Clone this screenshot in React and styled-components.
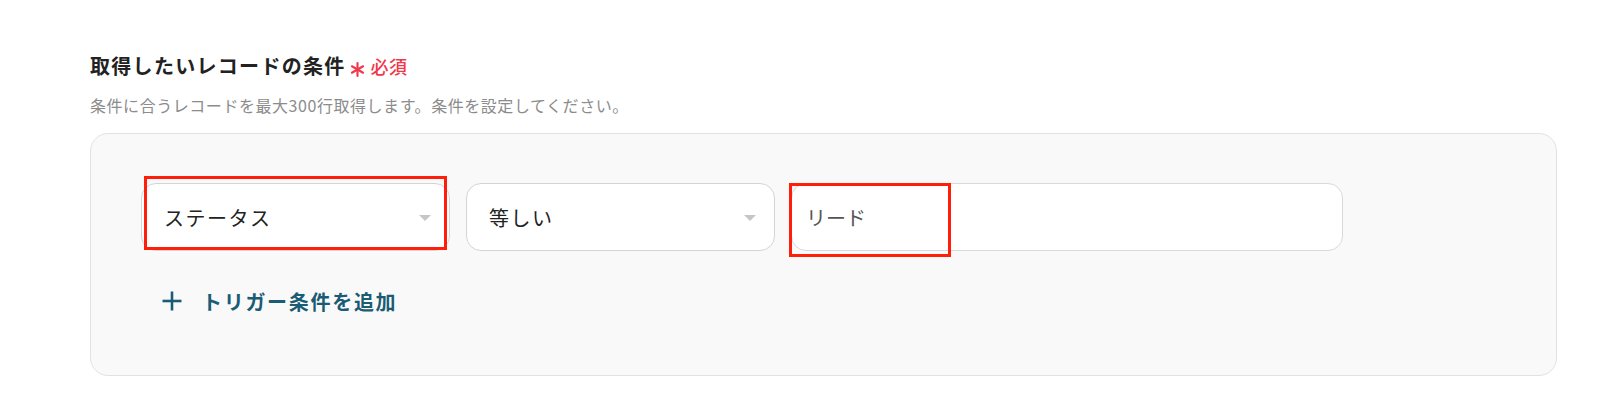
import React from "react";
import styled, { createGlobalStyle } from "styled-components";

const GlobalStyle = createGlobalStyle`
  html, body {
    margin: 0;
    padding: 0;
    background: #ffffff;
  }
  body {
    font-family: "Noto Sans CJK JP", "Noto Sans", sans-serif;
    color: #222;
  }
  * { box-sizing: border-box; }
`;

const Page = styled.div`
  width: 1600px;
  height: 412px;
  padding: 50px 0 0 90px;
`;

const TitleRow = styled.div`
  display: flex;
  align-items: baseline;
  gap: 4px;
  height: 32px;
`;

const Title = styled.h2`
  margin: 0;
  font-size: 20px;
  line-height: 32px;
  font-weight: 700;
  letter-spacing: 1.3px;
  color: #222;
`;

const Required = styled.span`
  display: inline-flex;
  align-items: baseline;
  gap: 6px;
  font-size: 18px;
  font-weight: 500;
  letter-spacing: 0.5px;
  color: #f2374d;
  svg { align-self: center; margin-top: 7px; }
`;

const Description = styled.p`
  margin: 11px 0 0;
  font-size: 16px;
  line-height: 24px;
  color: #8c8c8c;
  letter-spacing: 0.55px;
`;

const Panel = styled.div`
  margin-top: 16px;
  width: 1467px;
  height: 243px;
  background: #f9f9fa;
  border: 1px solid #e0e2e6;
  border-radius: 18px;
  padding: 49px 0 0 50px;
`;

const ConditionRow = styled.div`
  display: flex;
  align-items: center;
  gap: 16px;
`;

const Field = styled.div`
  position: relative;
  display: flex;
  align-items: center;
  width: ${(p) => p.$width}px;
  height: 68px;
  background: #fff;
  border: 1px solid ${(p) => (p.$input ? "#d6d9de" : "#d4d4d4")};
  border-radius: 15px;
  padding-left: ${(p) => (p.$input ? 14 : 22)}px;
  padding-right: 18px;
  font-size: 20px;
  letter-spacing: ${(p) => (p.$input ? 0 : 1.5)}px;
  color: ${(p) => (p.$input ? "#555" : "#222")};
`;

const FieldText = styled.span`
  flex: 1;
`;

const Caret = styled.span`
  width: 0;
  height: 0;
  border-left: 6.5px solid transparent;
  border-right: 6.5px solid transparent;
  border-top: 6px solid #c6c6c6;
  margin-top: 2px;
`;

const Highlight = styled.div`
  position: absolute;
  left: ${(p) => p.$left}px;
  top: ${(p) => p.$top}px;
  width: ${(p) => p.$w}px;
  height: ${(p) => p.$h}px;
  border: 3px solid #ff1e0a;
  pointer-events: none;
`;

const AddButton = styled.button`
  display: flex;
  align-items: center;
  gap: 20px;
  margin-top: 30px;
  margin-left: 21px;
  padding: 0;
  height: 40px;
  background: none;
  border: none;
  font-family: inherit;
  font-size: 20px;
  font-weight: 700;
  letter-spacing: 1.7px;
  color: #1a5c74;
  cursor: pointer;
`;

const Asterisk = () => (
  <svg width="15" height="15" viewBox="0 0 14 14">
    <g stroke="#f2374d" strokeWidth="2" strokeLinecap="round">
      <line x1="7" y1="1" x2="7" y2="13" />
      <line x1="1.8" y1="4" x2="12.2" y2="10" />
      <line x1="1.8" y1="10" x2="12.2" y2="4" />
    </g>
  </svg>
);

const PlusIcon = () => (
  <svg width="20" height="20" viewBox="0 0 20 20">
    <g stroke="#1a5c74" strokeWidth="2.6">
      <line x1="10" y1="0.5" x2="10" y2="19.5" />
      <line x1="0.5" y1="10" x2="19.5" y2="10" />
    </g>
  </svg>
);

export default function App() {
  return (
    <>
      <GlobalStyle />
      <Page>
        <TitleRow>
          <Title>取得したいレコードの条件</Title>
          <Required>
            <Asterisk />
            必須
          </Required>
        </TitleRow>
        <Description>
          条件に合うレコードを最大300行取得します。条件を設定してください。
        </Description>
        <Panel>
          <ConditionRow>
            <Field $width={309}>
              <FieldText>ステータス</FieldText>
              <Caret />
              <Highlight $left={2} $top={-8} $w={303} $h={74} />
            </Field>
            <Field $width={309}>
              <FieldText>等しい</FieldText>
              <Caret />
            </Field>
            <Field $width={552} $input>
              <FieldText>リード</FieldText>
              <Highlight $left={-3} $top={-1} $w={162} $h={74} />
            </Field>
          </ConditionRow>
          <AddButton>
            <PlusIcon />
            トリガー条件を追加
          </AddButton>
        </Panel>
      </Page>
    </>
  );
}
